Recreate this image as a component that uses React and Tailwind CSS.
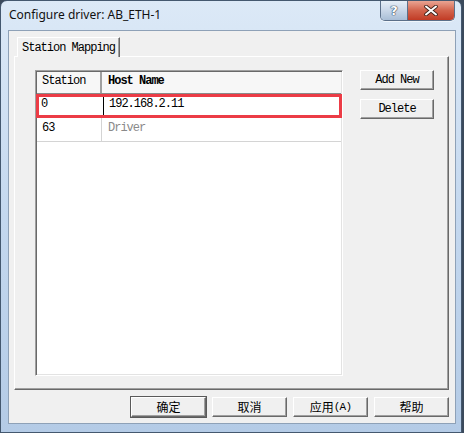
import React from 'react';

const mono = "font-['Liberation_Mono','DejaVu_Sans_Mono',monospace] text-[12px] leading-[14px] tracking-[-1px] text-black";

const WinButton = ({ children, isDefault, className }) => (
  <div
    className={
      'h-[20px] flex items-center justify-center bg-[#f0f0f0] border border-t-white border-l-white border-r-[#696969] border-b-[#696969] shadow-[inset_-1px_-1px_0_#a0a0a0] ' +
      (isDefault ? 'outline outline-1 outline-[#5a5a5a] ' : '') +
      className
    }
  >
    {children}
  </div>
);

const rows = [
  { station: '0', host: '192.168.2.11', selected: true },
  { station: '63', host: 'Driver', muted: true },
];

const App = () => {
  return (
    <div className="w-[464px] h-[433px] bg-[#3b4a5c]">
      <div className="w-[462px] h-[433px] rounded-t-[7px] border border-[#44586f] bg-gradient-to-b from-[#dce9f7] via-[#c4d8ef] to-[#b4cbe6] flex flex-col">
        {/* Title bar */}
        <div className="h-[29px] flex items-start justify-between">
          <div className="pl-[8px] pt-[6px] text-[12px] leading-[16px] text-[#111] font-['Noto_Sans','Open_Sans',sans-serif]">
            Configure driver: AB_ETH-1
          </div>
          <div className="flex mr-[6px] border border-t-0 border-[#5b6f89] rounded-b-[5px] overflow-hidden shadow-[0_1px_0_rgba(255,255,255,0.6)]">
            <div className="w-[27px] h-[19px] flex items-center justify-center bg-gradient-to-b from-[#e6eef7] via-[#c9d7e8] to-[#a9bed6] border-r border-[#5b6f89]">
              <span className="text-[13px] font-bold text-white leading-none font-['DejaVu_Sans',sans-serif] [text-shadow:0_0_1px_#2c3e55,0_0_1px_#2c3e55,0_0_1px_#2c3e55]">?</span>
            </div>
            <div className="w-[46px] h-[19px] flex items-center justify-center bg-gradient-to-b from-[#e9a493] via-[#d2634c] to-[#c13a24]">
              <svg width="14" height="11" viewBox="0 0 14 11">
                <path d="M2 1.5 L12 9.5 M12 1.5 L2 9.5" stroke="#3b2018" strokeWidth="3.6" strokeLinecap="round" />
                <path d="M2 1.5 L12 9.5 M12 1.5 L2 9.5" stroke="#ffffff" strokeWidth="2" strokeLinecap="round" />
              </svg>
            </div>
          </div>
        </div>

        {/* Client area */}
        <div className="mx-[7px] w-[448px] h-[394px] bg-[#f0f0f0] border border-[#8ea1b7] flex flex-col">
          {/* Tab strip */}
          <div className="pt-[6px] pl-[8px] flex">
            <div className={'w-[103px] h-[20px] bg-[#f0f0f0] border-l border-t border-r border-l-white border-t-white border-r-[#696969] shadow-[inset_-1px_0_0_#a0a0a0] flex items-center justify-center relative z-10 -mb-px ' + mono}>
              Station Mapping
            </div>
          </div>

          {/* Tab panel */}
          <div className="ml-[5px] w-[435px] h-[334px] border border-l-white border-t-white border-r-[#696969] border-b-[#696969] shadow-[inset_-1px_-1px_0_#a0a0a0] flex items-start pt-[13px] pl-[20px]">
            {/* List */}
            <div className="w-[308px] h-[306px] bg-white border border-t-[#a0a0a0] border-l-[#a0a0a0] border-r-white border-b-white shadow-[inset_1px_1px_0_#696969,inset_-1px_-1px_0_#e3e3e3] p-px flex flex-col">
              <div className="h-[23px] flex border-b-2 border-b-[#8a8a8a] bg-[#f7f7f7]">
                <div className={'w-[65px] border-r-2 border-r-[#a0a0a0] pl-[5px] pt-[2px] ' + mono}>Station</div>
                <div className={'flex-1 pl-[6px] pt-[2px] font-bold ' + mono}>Host Name</div>
              </div>
              {rows.map((r) => (
                <div
                  key={r.station}
                  className={
                    'h-[24px] flex ' +
                    (r.selected ? 'border-[3px] border-[#ec3c46] -mx-[1px] -mt-px' : 'border-b border-[#d4d4d4]')
                  }
                >
                  <div className={'w-[65px] border-r ' + (r.selected ? 'pl-[2px] pt-0 border-r-black' : 'pl-[5px] pt-[3px] border-r-[#d4d4d4]') + ' ' + mono}>
                    {r.station}
                  </div>
                  <div className={'flex-1 ' + (r.selected ? 'pl-[5px] pt-0 ' : 'pl-[6px] pt-[3px] ') + mono + (r.muted ? ' !text-[#8a8a8a]' : '')}>
                    {r.host}
                  </div>
                </div>
              ))}
            </div>

            {/* Side buttons */}
            <div className="ml-[17px] flex flex-col gap-[9px]">
              <WinButton className={'w-[74px] ' + mono}>Add New</WinButton>
              <WinButton className={'w-[74px] ' + mono}>Delete</WinButton>
            </div>
          </div>

          {/* Bottom buttons */}
          <div className="mt-[7px] pr-[6px] flex justify-end gap-[6px] font-['Noto_Sans_CJK_SC',sans-serif] text-[12px] text-black">
            <WinButton isDefault className="w-[75px]">确定</WinButton>
            <WinButton className="w-[75px]">取消</WinButton>
            <WinButton className="w-[75px]">
              应用<span className="font-['Liberation_Mono',monospace] text-[11px] tracking-[-0.8px]">(A)</span>
            </WinButton>
            <WinButton className="w-[75px]">帮助</WinButton>
          </div>
        </div>
      </div>
    </div>
  );
};

export default App;
